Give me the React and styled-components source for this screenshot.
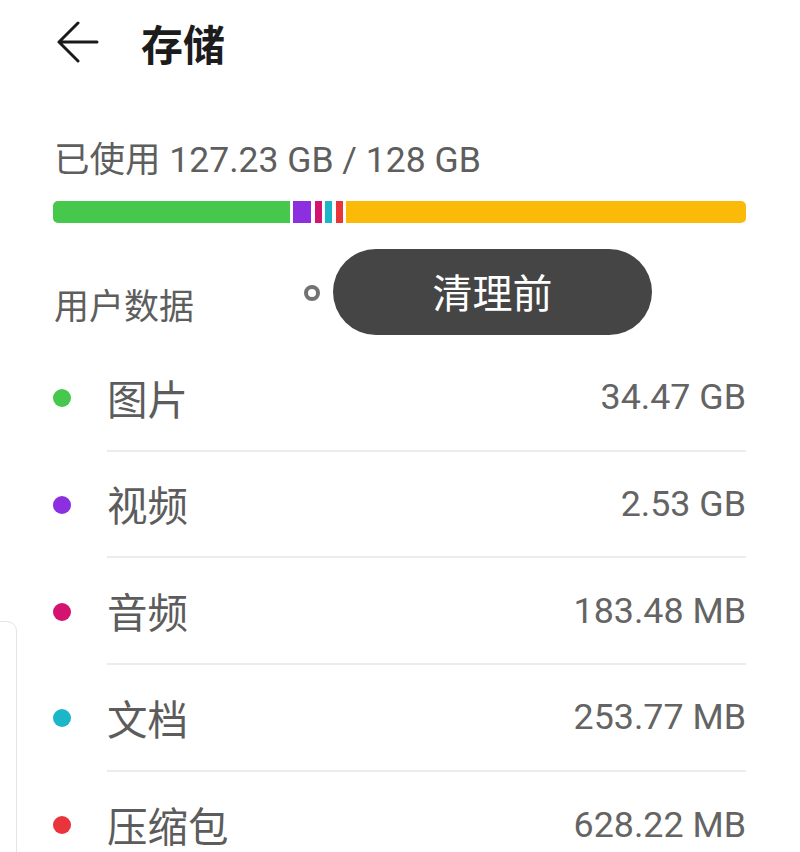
import React from "react";
import styled, { createGlobalStyle } from "styled-components";

const Global = createGlobalStyle`
  html, body { margin: 0; padding: 0; background: #ffffff; }
  body { font-family: Roboto, "Noto Sans CJK SC", sans-serif; }
  * { box-sizing: border-box; }
`;

const Page = styled.div`
  position: relative;
  width: 800px;
  height: 852px;
  overflow: hidden;
  background: #fff;
  padding: 0 54px 0 53px;
`;

const Header = styled.header`
  height: 86px;
  display: flex;
  align-items: center;
`;

const BackButton = styled.button`
  border: 0;
  background: none;
  padding: 0;
  width: 46px;
  height: 46px;
  display: flex;
  align-items: center;
  justify-content: center;
  margin-left: 2px;
  color: #1a1a1a;
`;

const Title = styled.h1`
  margin: 0 0 0 40px;
  font-family: "Noto Sans CJK SC", sans-serif;
  font-size: 42px;
  font-weight: 700;
  color: #1c1c1c;
  line-height: 1;
`;

const UsedText = styled.div`
  margin-top: 54px;
  font-size: 35.5px;
  line-height: 40px;
  color: #5e5e5e;
  padding-left: 1px;
`;

const Bar = styled.div`
  margin-top: 21px;
  height: 22px;
  display: flex;
  gap: 3.4px;
  border-radius: 5px;
  overflow: hidden;
  width: 693px;
`;

const Segment = styled.div`
  flex: ${(p) => (p.$grow ? "1 1 0" : "0 0 auto")};
  width: ${(p) => p.$w}px;
  background: ${(p) => p.$color};
`;

const SectionTitle = styled.div`
  margin-top: 60px;
  font-family: "Noto Sans CJK SC", sans-serif;
  font-size: 35px;
  line-height: 42px;
  color: #5e5e5e;
  padding-left: 1px;
`;

const List = styled.ul`
  list-style: none;
  margin: 20px 0 0;
  padding: 0;
`;

const Row = styled.li`
  display: flex;
  align-items: center;
`;

const Dot = styled.span`
  width: 18px;
  height: 18px;
  border-radius: 50%;
  background: ${(p) => p.$color};
  flex: 0 0 auto;
  margin-right: 36px;
`;

const RowBody = styled.div`
  flex: 1;
  height: 106.67px;
  display: flex;
  align-items: center;
  justify-content: space-between;
  border-bottom: ${(p) => (p.$last ? "none" : "2px solid #ececec")};
`;

const Label = styled.span`
  font-family: "Noto Sans CJK SC", sans-serif;
  font-size: 40.5px;
  color: #5c5c5c;
`;

const Value = styled.span`
  font-size: 35.8px;
  color: #646464;
`;

const Tooltip = styled.div`
  position: absolute;
  left: 333px;
  top: 249px;
  width: 319px;
  height: 86px;
  border-radius: 43px;
  background: #454545;
  color: #ffffff;
  display: flex;
  align-items: center;
  justify-content: center;
  font-family: "Noto Sans CJK SC", sans-serif;
  font-size: 40px;
  padding-bottom: 2px;
`;

const Ring = styled.span`
  position: absolute;
  left: 304px;
  top: 285px;
  width: 16px;
  height: 16px;
  border-radius: 50%;
  border: 4.5px solid #727272;
`;

const GhostPanel = styled.div`
  position: absolute;
  left: -20px;
  top: 621px;
  width: 37px;
  height: 260px;
  border: 1.5px solid #e4e4e4;
  border-radius: 10px;
`;

const segments = [
  { color: "#45c84b", w: 237 },
  { color: "#8b2fe0", w: 18 },
  { color: "#d3136f", w: 7 },
  { color: "#1bb7c8", w: 7 },
  { color: "#e8343a", w: 7 },
  { color: "#fcba08", grow: true },
];

const items = [
  { label: "图片", value: "34.47 GB", color: "#45c84b" },
  { label: "视频", value: "2.53 GB", color: "#8b2fe0" },
  { label: "音频", value: "183.48 MB", color: "#d3136f" },
  { label: "文档", value: "253.77 MB", color: "#1bb7c8" },
  { label: "压缩包", value: "628.22 MB", color: "#e8343a" },
];

function BackArrow() {
  return (
    <svg width="44" height="44" viewBox="0 0 44 44" fill="none">
      <path
        d="M3 21 H41 M3 21 L22 2 M3 21 L22 40"
        stroke="#1a1a1a"
        strokeWidth="3"
        strokeLinecap="round"
        strokeLinejoin="round"
      />
    </svg>
  );
}

export default function App() {
  return (
    <>
      <Global />
      <Page>
        <Header>
          <BackButton aria-label="返回">
            <BackArrow />
          </BackButton>
          <Title>存储</Title>
        </Header>
        <UsedText>已使用 127.23 GB / 128 GB</UsedText>
        <Bar>
          {segments.map((s, i) => (
            <Segment key={i} $color={s.color} $w={s.w} $grow={s.grow} />
          ))}
        </Bar>
        <SectionTitle>用户数据</SectionTitle>
        <List>
          {items.map((it, i) => (
            <Row key={it.label}>
              <Dot $color={it.color} />
              <RowBody $last={i === items.length - 1}>
                <Label>{it.label}</Label>
                <Value>{it.value}</Value>
              </RowBody>
            </Row>
          ))}
        </List>
        <Ring />
        <Tooltip>清理前</Tooltip>
        <GhostPanel />
      </Page>
    </>
  );
}
